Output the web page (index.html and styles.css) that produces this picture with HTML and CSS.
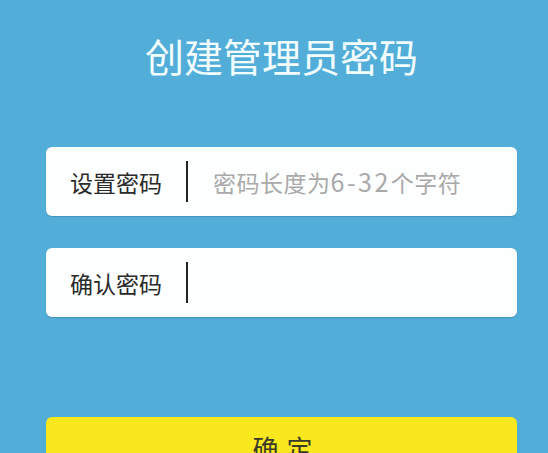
FILE: index.html
```html
<!DOCTYPE html>
<html lang="zh-CN">
<head>
<meta charset="utf-8">
<title>创建管理员密码</title>
<link rel="stylesheet" href="styles.css">
</head>
<body>
<main class="page">
  <h1 class="title">创建管理员密码</h1>
  <div class="field field-first">
    <span class="label">设置密码</span>
    <span class="divider"></span>
    <span class="placeholder">密码长度为<span class="digits">6-32</span>个字符</span>
  </div>
  <div class="field field-second">
    <span class="label">确认密码</span>
    <span class="divider"></span>
  </div>
  <div class="button"><span>确</span><span>定</span></div>
</main>
</body>
</html>
```
FILE: styles.css
```css
html, body {
  margin: 0;
  padding: 0;
  background: #52aed9;
  height: 100%;
  overflow: hidden;
}
body {
  font-family: "Noto Sans CJK SC", "Noto Sans", sans-serif;
}
.page {
  margin-left: 46px;
  width: 471px;
  padding-top: 31px;
}
.title {
  margin: 0;
  font-size: 39px;
  line-height: 48px;
  font-weight: 400;
  color: #f2fdff;
  text-align: center;
}
.field {
  display: flex;
  align-items: center;
  height: 69px;
  background: #fdfefe;
  border-radius: 6px;
  padding-left: 24px;
  box-sizing: border-box;
  box-shadow: 0 1px 1px rgba(40, 100, 130, 0.35);
}
.field-first {
  margin-top: 68px;
}
.field-second {
  margin-top: 32px;
}
.label {
  font-size: 23px;
  line-height: 30px;
  color: #2a2a2a;
  width: 92px;
  white-space: nowrap;
}
.divider {
  width: 2px;
  height: 41px;
  background: #222;
  margin-left: 24px;
}
.placeholder {
  margin-left: 25px;
  font-size: 23px;
  line-height: 30px;
  color: #a9a9a9;
  white-space: nowrap;
  letter-spacing: 0.5px;
}
.digits {
  font-size: 25px;
  letter-spacing: 2.5px;
}
.button {
  margin-top: 100px;
  height: 60px;
  background: #f9e81d;
  border-radius: 6px;
  display: flex;
  justify-content: center;
  gap: 8px;
  font-size: 26px;
  line-height: 30px;
  padding-top: 16px;
  padding-left: 2px;
  box-sizing: border-box;
  color: #3a3a2a;
}
```
